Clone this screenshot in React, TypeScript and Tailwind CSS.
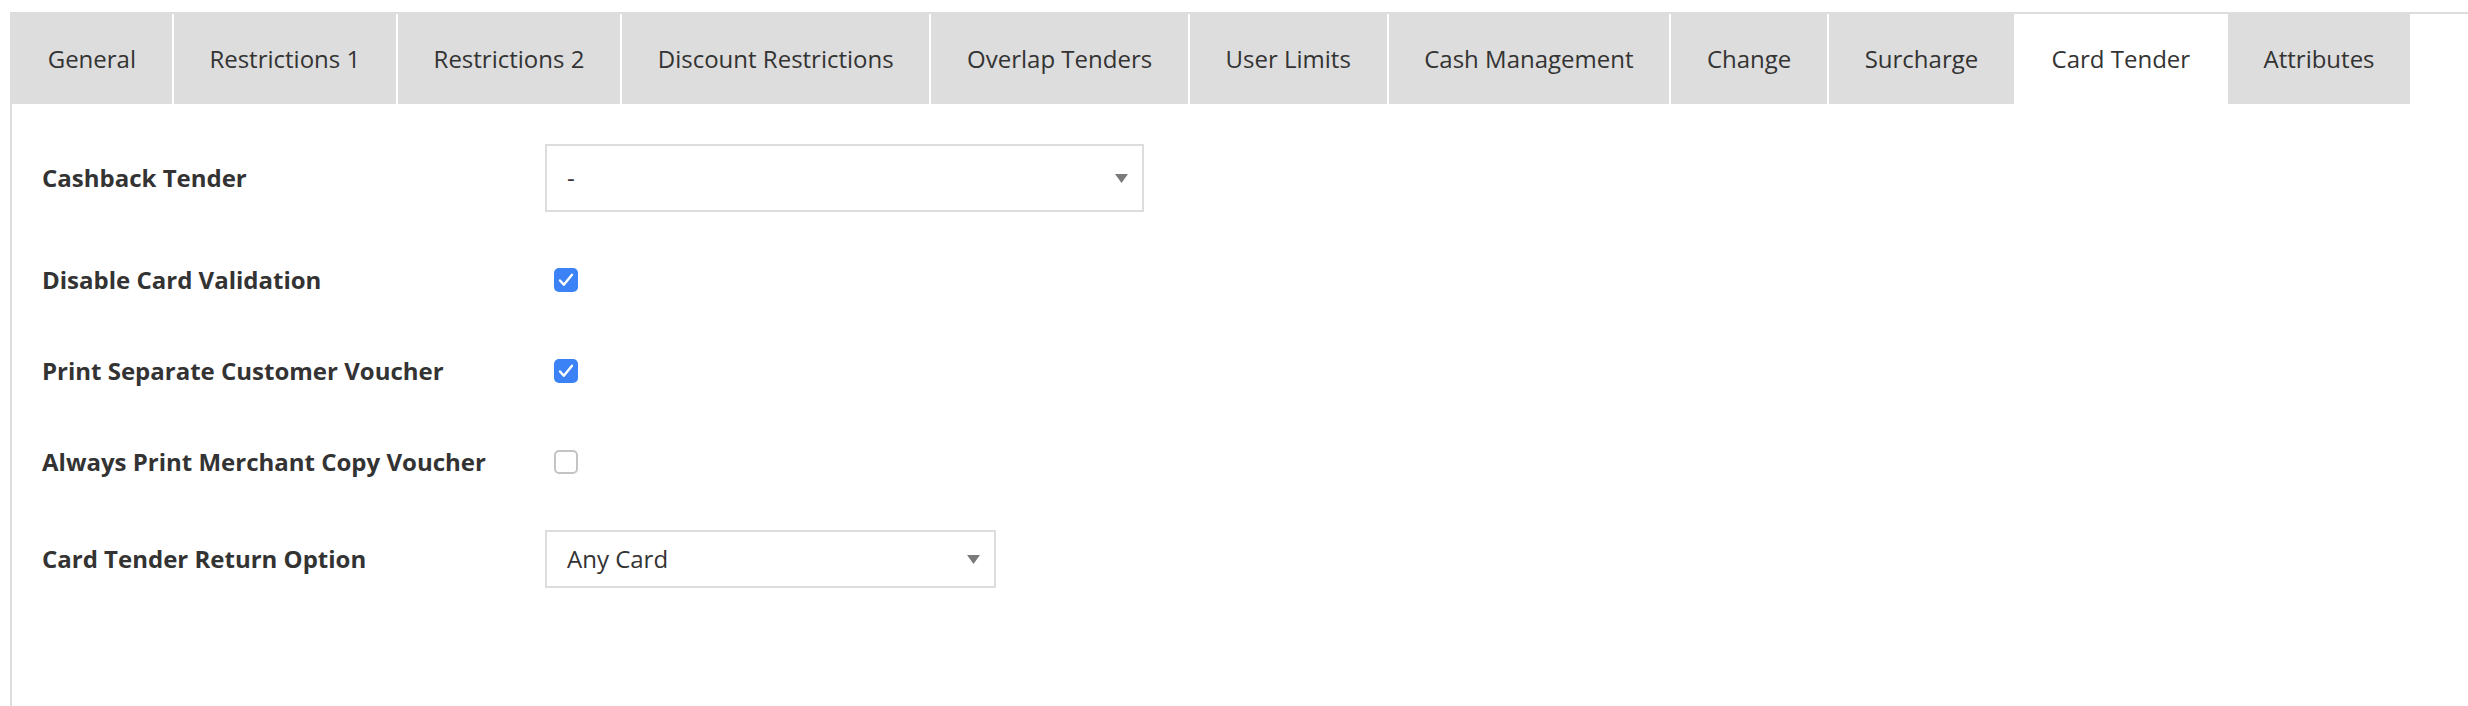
import React from "react";

const tabs = [
  "General",
  "Restrictions 1",
  "Restrictions 2",
  "Discount Restrictions",
  "Overlap Tenders",
  "User Limits",
  "Cash Management",
  "Change",
  "Surcharge",
  "Card Tender",
  "Attributes",
];

function Checkbox({ checked }: { checked: boolean }) {
  if (checked) {
    return (
      <div className="w-6 h-6 rounded-[5px] bg-[#3b82f6]">
        <svg width="24" height="24" viewBox="0 0 24 24" fill="none">
          <path
            d="M6 12.5 L9.8 16.8 L18 6.8"
            stroke="white"
            strokeWidth="2.4"
            strokeLinecap="round"
            strokeLinejoin="round"
          />
        </svg>
      </div>
    );
  }
  return <div className="w-6 h-6 rounded-[5px] border-2 border-[#c4c4c4] bg-white" />;
}

function Select({ value, className }: { value: string; className: string }) {
  return (
    <div
      className={
        "flex items-center justify-between border-2 border-[#dddddd] bg-white pl-5 pr-[14px] " +
        className
      }
    >
      <span className="text-[24px] text-[#333]">{value}</span>
      <svg width="13" height="9" viewBox="0 0 13 9">
        <path d="M0 0 L13 0 L6.5 9 Z" fill="#7a7a7a" />
      </svg>
    </div>
  );
}

function Row({ label, children }: { label: string; children: React.ReactNode }) {
  return (
    <div className="flex items-center">
      <div className="w-[503px] shrink-0 text-[24px] font-bold text-[#333]">{label}</div>
      {children}
    </div>
  );
}

export default function App() {
  return (
    <main
      className="h-[706px] overflow-hidden bg-white pl-[10px] pt-[12px]"
      style={{ fontFamily: "'Open Sans', 'Liberation Sans', sans-serif" }}
    >
      <div className="h-full border-t-2 border-l-2 border-[#dddddd] flex flex-col">
        {/* tab bar */}
        <div className="flex gap-[2px] h-[90px]">
          {tabs.map((t) => (
            <div
              key={t}
              className={
                "px-[35.7px] flex items-center text-[24px] text-[#333] whitespace-nowrap " +
                (t === "Card Tender" ? "bg-white" : "bg-[#dddddd]")
              }
            >
              {t}
            </div>
          ))}
        </div>

        {/* form */}
        <div className="flex flex-col gap-[45px] pl-[30px] pt-[40px]">
          <Row label="Cashback Tender">
            <Select value="-" className="w-[599px] h-[68px]" />
          </Row>
          <Row label="Disable Card Validation">
            <div className="h-[46px] flex items-center pl-[9px]">
              <Checkbox checked />
            </div>
          </Row>
          <Row label="Print Separate Customer Voucher">
            <div className="h-[46px] flex items-center pl-[9px]">
              <Checkbox checked />
            </div>
          </Row>
          <Row label="Always Print Merchant Copy Voucher">
            <div className="h-[46px] flex items-center pl-[9px]">
              <Checkbox checked={false} />
            </div>
          </Row>
          <Row label="Card Tender Return Option">
            <Select value="Any Card" className="w-[451px] h-[58px]" />
          </Row>
        </div>
      </div>
    </main>
  );
}
